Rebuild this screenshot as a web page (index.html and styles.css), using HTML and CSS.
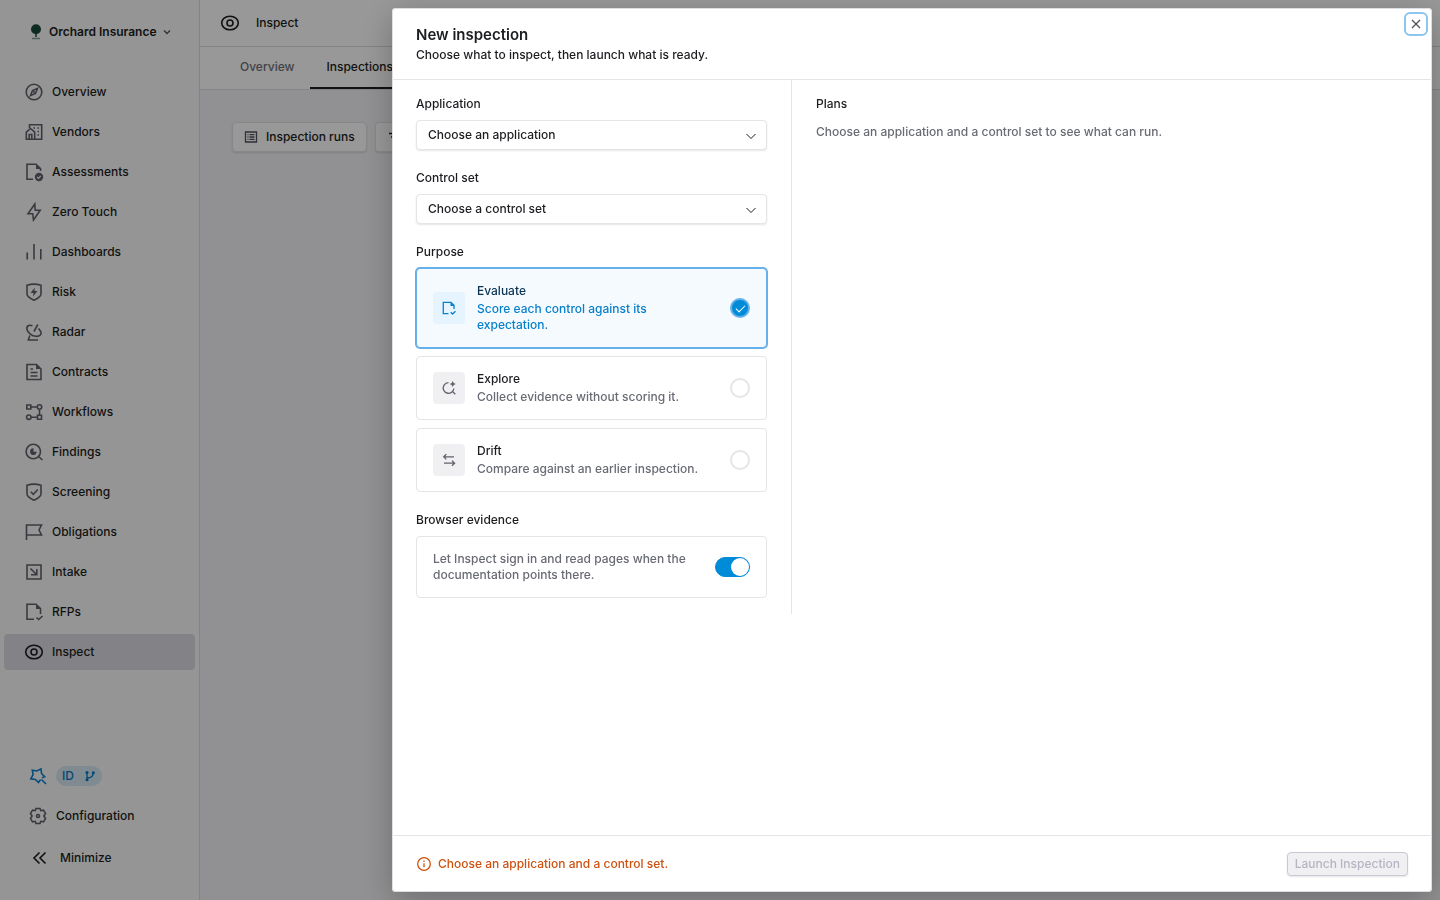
FILE: index.html
```html
<!DOCTYPE html>
<html lang="en">
<head>
  <meta charset="UTF-8">
  <meta name="viewport" content="width=device-width, initial-scale=1">
  <title>Inspect</title>
  <link rel="stylesheet" href="styles.css">
</head>
<body>
  <div class="app">
    <aside class="sidebar">
      <button class="org" type="button">
        <svg class="org-logo" width="14" height="18" viewBox="0 0 14 18"><circle cx="7" cy="6.200" r="5" fill="#1b4a39"/><path d="M7 9v5" stroke="#1b4a39" stroke-width="1.500"/><path d="M3 15.500h8" stroke="#7fa392" stroke-width="1.500"/></svg>
        <span>Orchard Insurance</span>
        <svg width="8" height="8" viewBox="0 0 8 8" class="line muted"><path d="M1 2.500l3 3 3-3"/></svg>
      </button>
      <nav class="nav">
        <a href="#" class="nav-item"><svg class="icon" viewBox="0 0 20 20"><circle cx="10" cy="10" r="7.800"/><path d="M13.500 6.500l-2 5-5 2 2-5z"/><circle class="solid" cx="10" cy="10" r="1"/></svg>Overview</a>
        <a href="#" class="nav-item"><svg class="icon" viewBox="0 0 20 20"><path d="M5.500 6V2.800h12.200v14.400H2.300v-7L6.500 6.500l4.200 3.700v7M5.200 17v-4.500h2.600V17"/><path d="M9.500 6h1.500M13.500 6H15M13.500 9.500H15M13.500 13H15"/></svg>Vendors</a>
        <a href="#" class="nav-item"><svg class="icon" viewBox="0 0 20 20"><path d="M9 17.300H3V2.200h9l4.500 4.500V9"/><path class="solid" d="M12 2l5 5h-5z"/><circle class="solid" cx="15" cy="15" r="4.200"/><path class="knock" d="M13.200 15l1.300 1.300 2.300-2.400"/></svg>Assessments</a>
        <a href="#" class="nav-item"><svg class="icon" viewBox="0 0 20 20"><path d="M10.800 2L4 11.700h4.700L9.500 18l6.700-9.700h-5z"/></svg>Zero Touch</a>
        <a href="#" class="nav-item"><svg class="icon" viewBox="0 0 20 20"><path d="M3.200 10.500v7M10 2v15.500M16.800 7v10.500"/></svg>Dashboards</a>
        <a href="#" class="nav-item"><svg class="icon" viewBox="0 0 20 20"><path d="M3 3.200Q10 1 17 3.200V12q0 3-7 6.200Q3 15 3 12z"/><path class="solid" d="M10.800 5.500L6.500 11h3l-.5 3.500 4.500-5.500h-3z"/></svg>Risk</a>
        <a href="#" class="nav-item"><svg class="icon" viewBox="0 0 20 20"><path d="M8.500 3.800C5 2.300 2.200 4 3 7.500s5 6.500 9 6.800 5.800-2.300 4.800-4.800L14.500 6.500M10 9.500L13.800 2.500M3.500 18h10.500M4.500 17.500l1.300-4"/></svg>Radar</a>
        <a href="#" class="nav-item"><svg class="icon" viewBox="0 0 20 20"><path d="M3 2.500h9.500L17 7v10.500H3z"/><path class="solid" d="M12 2l5 5h-5z"/><path d="M6.500 7H9M6.500 10.500h7M6.500 14h7"/></svg>Contracts</a>
        <a href="#" class="nav-item"><svg class="icon" viewBox="0 0 20 20"><path d="M2.800 3h4v4h-4zM13.500 13.200h4v4h-4zM7 5h6M15.500 7.500V13M7 15.200h6.500"/><circle cx="15.500" cy="5" r="2.200"/><circle cx="4.800" cy="15.200" r="2.200"/></svg>Workflows</a>
        <a href="#" class="nav-item"><svg class="icon" viewBox="0 0 20 20"><circle cx="9.300" cy="9.500" r="7.200"/><path d="M14.500 14.500l4 3.500"/><path class="solid" d="M9.500 6.300a3.300 3.300 0 1 0 3.200 3.500H9.500z"/></svg>Findings</a>
        <a href="#" class="nav-item"><svg class="icon" viewBox="0 0 20 20"><path d="M3 3.200Q10 1 17 3.200V12q0 3-7 6.200Q3 15 3 12z"/><path d="M6.800 9.800l2.500 2.500 4.500-4.800"/></svg>Screening</a>
        <a href="#" class="nav-item"><svg class="icon" viewBox="0 0 20 20"><path d="M2.500 18V3h15l-2.500 5 2.500 5h-15"/></svg>Obligations</a>
        <a href="#" class="nav-item"><svg class="icon" viewBox="0 0 20 20"><path d="M3 3h14v14H3zM6.500 6.500l6 6M12.800 7v5.800H7"/></svg>Intake</a>
        <a href="#" class="nav-item"><svg class="icon" viewBox="0 0 20 20"><path d="M10 17.300H3V2.200h9l4.500 4.500V12M12.500 15.500l2.200 2 3.800-3.500"/><path class="solid" d="M12 2l5 5h-5z"/></svg>RFPs</a>
        <a href="#" class="nav-item active"><svg class="icon" viewBox="0 0 20 20"><ellipse cx="10" cy="10" rx="8.300" ry="6.800"/><circle cx="10" cy="10" r="3"/></svg>Inspect</a>
      </nav>
      <div class="side-foot">
        <a href="#" class="foot-item"><svg class="icon blue" viewBox="0 0 20 20"><path d="M12.600 13.500L10.500 16.500 7.400 13.500 2.800 12.800 5.100 8.700 4.300 4.300 8.900 5 13 2.900 13.500 7.500 16.700 10.800 14 11.800M13.500 13.500l4.500 4.500"/></svg><span class="badge">ID <svg width="12" height="12" viewBox="0 0 12 12" class="line"><path d="M3 3v6M3 8c4 0 6-1 6-4.500"/><circle class="solid" cx="3" cy="2.500" r="1.500"/><circle class="solid" cx="3" cy="9.800" r="1.500"/><circle class="solid" cx="9.300" cy="2.800" r="1.500"/></svg></span></a>
        <a href="#" class="foot-item"><svg class="icon" viewBox="0 0 20 20"><path d="M8 2.500h4l.8 2.200 2.700-.5 2 3.200-1.600 2.600 1.600 2.600-2 3.200-2.700-.5-.8 2.200H8l-.8-2.200-2.700.5-2-3.200L4.100 10 2.500 7.400l2-3.200 2.700.5z"/><circle cx="10" cy="10" r="1.500"/></svg>Configuration</a>
        <button type="button" class="foot-item minimize"><svg class="icon" viewBox="0 0 20 20"><path d="M9.500 4.500L4 10l5.500 5.500M15.500 4.500L10 10l5.500 5.500"/></svg>Minimize</button>
      </div>
    </aside>
    <main class="main">
      <header class="topbar">
        <svg class="icon" viewBox="0 0 20 20"><ellipse cx="10" cy="10" rx="8.300" ry="6.800"/><circle cx="10" cy="10" r="3"/></svg>
        <span>Inspect</span>
      </header>
      <nav class="tabs">
        <a href="#" class="tab">Overview</a>
        <a href="#" class="tab current">Inspections</a>
      </nav>
      <div class="toolbar">
        <button type="button" class="btn"><svg width="14" height="14" viewBox="0 0 14 14" class="line muted"><path d="M1.500 2h11v10h-11zM3.500 4.700h1M5.500 4.700h5M3.500 7h1M5.500 7h5M3.500 9.300h1M5.500 9.300h5"/></svg>Inspection runs</button>
        <button type="button" class="btn"><svg width="14" height="14" viewBox="0 0 14 14" class="line"><path d="M2 3.500h10M4 7h6M6 10.500h2"/></svg>Filter</button>
      </div>
    </main>
  </div>

  <div class="overlay">
    <section class="modal" role="dialog" aria-labelledby="modalTitle">
      <header class="modal-head">
        <h1 id="modalTitle">New inspection</h1>
        <p>Choose what to inspect, then launch what is ready.</p>
        <button type="button" class="close" aria-label="Close"><svg width="12" height="12" viewBox="0 0 12 12" class="line muted"><path d="M2 2l8 8M10 2l-8 8"/></svg></button>
      </header>
      <div class="modal-body">
        <form class="setup">
          <div class="field">
            <label for="application">Application</label>
            <div class="select">
              <select id="application"><option>Choose an application</option></select>
              <svg width="12" height="12" viewBox="0 0 12 12"><path d="M1.500 5L6 9.500 10.500 5"/></svg>
            </div>
          </div>
          <div class="field">
            <label for="controlSet">Control set</label>
            <div class="select">
              <select id="controlSet"><option>Choose a control set</option></select>
              <svg width="12" height="12" viewBox="0 0 12 12"><path d="M1.500 5L6 9.500 10.500 5"/></svg>
            </div>
          </div>
          <div class="field" role="radiogroup" aria-labelledby="purpose">
            <span id="purpose">Purpose</span>
            <label class="card selected" for="evaluate">
              <span class="tile"><svg width="16" height="16" viewBox="0 0 16 16" class="line"><path d="M7.500 13.700H2.300V2.300H10l3 3V9M9.700 12.300l1.800 1.700 3-2.700"/><path class="solid" d="M9.500 2l4 4h-4z"/></svg></span>
              <span class="card-text"><b>Evaluate</b><span>Score each control against its expectation.</span></span>
              <input type="radio" name="purpose" id="evaluate" checked>
            </label>
            <label class="card" for="explore">
              <span class="tile"><svg width="16" height="16" viewBox="0 0 16 16" class="line"><path d="M7.500 2.700a5.300 5.300 0 1 0 4 8.800M12.800 8.500a5.300 5.300 0 0 1-1.300 3l2.800 2.700"/><path class="solid" d="M11.700 1l1 2 2 1-2 1-1 2-1-2-2-1 2-1z"/></svg></span>
              <span class="card-text"><b>Explore</b><span>Collect evidence without scoring it.</span></span>
              <input type="radio" name="purpose" id="explore">
            </label>
            <label class="card" for="drift">
              <span class="tile"><svg width="16" height="16" viewBox="0 0 16 16" class="line"><path d="M13 4.800H3M5.300 2.200L2.700 4.800l2.600 2.600M3 11.200h10.500M11 8.600l2.600 2.600-2.600 2.600"/></svg></span>
              <span class="card-text"><b>Drift</b><span>Compare against an earlier inspection.</span></span>
              <input type="radio" name="purpose" id="drift">
            </label>
          </div>
          <div class="field">
            <span>Browser evidence</span>
            <label class="card" for="browserEvidence">
              <span class="card-text"><span>Let Inspect sign in and read pages when the documentation points there.</span></span>
              <input type="checkbox" class="toggle" id="browserEvidence" checked>
            </label>
          </div>
        </form>
        <section class="plans">
          <h2>Plans</h2>
          <p>Choose an application and a control set to see what can run.</p>
        </section>
      </div>
      <footer class="modal-foot">
        <p class="notice"><svg width="16" height="16" viewBox="0 0 16 16" class="line"><circle cx="8" cy="8" r="6.300"/><path d="M8 7.300v4M8 4.500v1.400"/></svg>Choose an application and a control set.</p>
        <button type="button" class="launch" disabled>Launch Inspection</button>
      </footer>
    </section>
  </div>
</body>
</html>
```
FILE: styles.css
```css
* { box-sizing: border-box; }
body { margin: 0; font: 500 12px/16px Inter, sans-serif; color: #1c1d21; }
h1, h2, p { margin: 0; font: inherit; }
a { color: inherit; text-decoration: none; }
button, select { font: inherit; color: inherit; margin: 0; }
svg { flex: none; fill: none; stroke: currentColor; stroke-width: 1; }
.line { stroke-width: 1.3; }
.muted { color: #50525a; }
.solid { fill: currentColor; stroke: none; }
.knock { stroke: #f9f9f9; stroke-width: 1.2; }
.icon { width: 20px; height: 20px; color: #60626b; stroke-width: 1.6; }

.app { display: flex; height: 100vh; overflow: hidden; }
.sidebar { width: 200px; flex: none; display: flex; flex-direction: column; background: #f9f9f9; border-right: 1px solid #dcdce0; padding: 20px 4px 24px; }
.org { display: flex; align-items: center; gap: 6px; height: 24px; border: 0; background: none; padding: 0 25px; font-weight: 600; white-space: nowrap; }
.org-logo { stroke: none; }
.nav { display: flex; flex-direction: column; gap: 4px; margin-top: 30px; }
.nav-item { display: flex; align-items: center; gap: 8px; height: 36px; padding: 0 20px; border-radius: 4px; }
.active { background: #dadae2; }
.active .icon, .topbar .icon, .minimize .icon { color: #1c1d21; }
.side-foot { margin-top: auto; display: flex; flex-direction: column; gap: 4px; }
.foot-item { display: flex; align-items: center; gap: 8px; height: 36px; padding: 0 24px; border: 0; background: none; }
.minimize { padding: 0 26px; gap: 10px; margin-top: 2px; }
.side-foot .blue { color: #0880cc; }
.badge { display: flex; align-items: center; gap: 10px; height: 20px; padding: 0 6px; border-radius: 10px; background: #d5e6f2; color: #0877be; }

.main { flex: 1; background: #f2f2f5; }
.topbar { display: flex; align-items: center; gap: 16px; height: 47px; padding: 0 20px; background: #fdfdfd; border-bottom: 1px solid #dcdce0; }
.tabs { display: flex; height: 43px; padding: 0 24px; background: #fdfdfd; border-bottom: 1px solid #dcdce0; }
.tab { padding: 12px 16px; color: #6e7079; }
.current { color: #1c1d21; border-bottom: 2px solid #1c1d21; }
.toolbar { display: flex; gap: 8px; padding: 32px; }
.btn { display: flex; align-items: center; gap: 8px; height: 30px; padding: 0 11px; border: 1px solid #e2e2e6; border-radius: 4px; background: #fdfdfd; box-shadow: 0 1px 2px rgba(0,0,0,0.12); }

.overlay { position: fixed; inset: 0; padding: 8px; display: flex; justify-content: flex-end; background: rgba(0,0,0,0.4); }
.modal { width: 1040px; max-width: 100%; display: flex; flex-direction: column; background: #fff; border-radius: 4px; box-shadow: inset 0 0 0 1px #dedee2, 0 8px 32px rgba(0,0,0,0.25); }
.modal-head { position: relative; padding: 16px 24px; border-bottom: 1px solid #e5e5e9; }
.modal-head h1 { font-size: 15px; line-height: 22px; font-weight: 600; }
.modal-head p { font-weight: 450; line-height: 17px; }
.close { position: absolute; top: 6px; right: 6px; display: grid; place-items: center; width: 20px; height: 20px; padding: 0; border: 0; border-radius: 4px; background: #fff; outline: 2px solid #8cc6ef; }
.modal-body { flex: 1; display: flex; align-items: flex-start; overflow: auto; }
.setup { width: 400px; flex: none; display: flex; flex-direction: column; gap: 20px; padding: 16px 24px; border-right: 1px solid #e5e5e9; }
.field { display: flex; flex-direction: column; gap: 8px; }
.select { display: grid; align-items: center; }
.select select, .select svg { grid-area: 1 / 1; }
.select select { appearance: none; width: 100%; height: 30px; padding: 0 11px; border: 1px solid #e5e5e9; border-radius: 4px; background: #fff; box-shadow: 0 1px 2px rgba(0,0,0,0.1); }
.select svg { justify-self: end; margin-right: 10px; pointer-events: none; }
.card { display: flex; align-items: center; gap: 12px; padding: 14px 16px; border: 1px solid #e5e5e9; border-radius: 4px; }
.tile { display: grid; place-items: center; width: 32px; height: 32px; flex: none; border-radius: 4px; background: #f0f0f3; color: #60626b; }
.card-text { flex: 1; display: flex; flex-direction: column; gap: 2px; padding-right: 12px; }
.card-text b { font-weight: 500; }
.card-text span { font-weight: 450; color: #696b74; }
.card input { appearance: none; flex: none; width: 20px; height: 20px; margin: 0; border: 2px solid #e5e5e9; border-radius: 10px; background: #fff; }
.selected { border-color: #65b0e8; background: #f5faff; box-shadow: 0 0 0 1px #65b0e8; }
.selected .tile { background: #e6f4ff; color: #0880cc; }
.selected b { color: #0b3454; }
.selected .card-text span { color: #0880cc; }
.card input:checked { display: grid; place-items: center; border-color: #65b0e8; background: #008bd9; }
.card input[type=radio]:checked::after { content: ""; width: 8px; height: 4px; border: solid #fff; border-width: 0 0 1px 1px; transform: translateY(-1px) rotate(-45deg); }
.card .toggle:checked { width: 35px; justify-items: end; border: 1px solid #008bd9; }
.toggle::after { content: ""; width: 18px; height: 18px; border-radius: 9px; background: #fff; }
.plans { flex: 1; display: flex; flex-direction: column; gap: 12px; padding: 16px 24px; }
.plans p { color: #696b74; font-weight: 450; }
.modal-foot { display: flex; align-items: center; justify-content: space-between; height: 57px; padding: 0 24px; border-top: 1px solid #e5e5e9; }
.notice { display: flex; align-items: center; gap: 6px; font-weight: 450; color: #cc5210; }
.launch { height: 24px; padding: 0 7px; border: 1px solid #c9c9d3; border-radius: 4px; background: #f0f0f3; color: #b4b4c2; box-shadow: 0 1px 2px rgba(0,0,0,0.1); }
```
